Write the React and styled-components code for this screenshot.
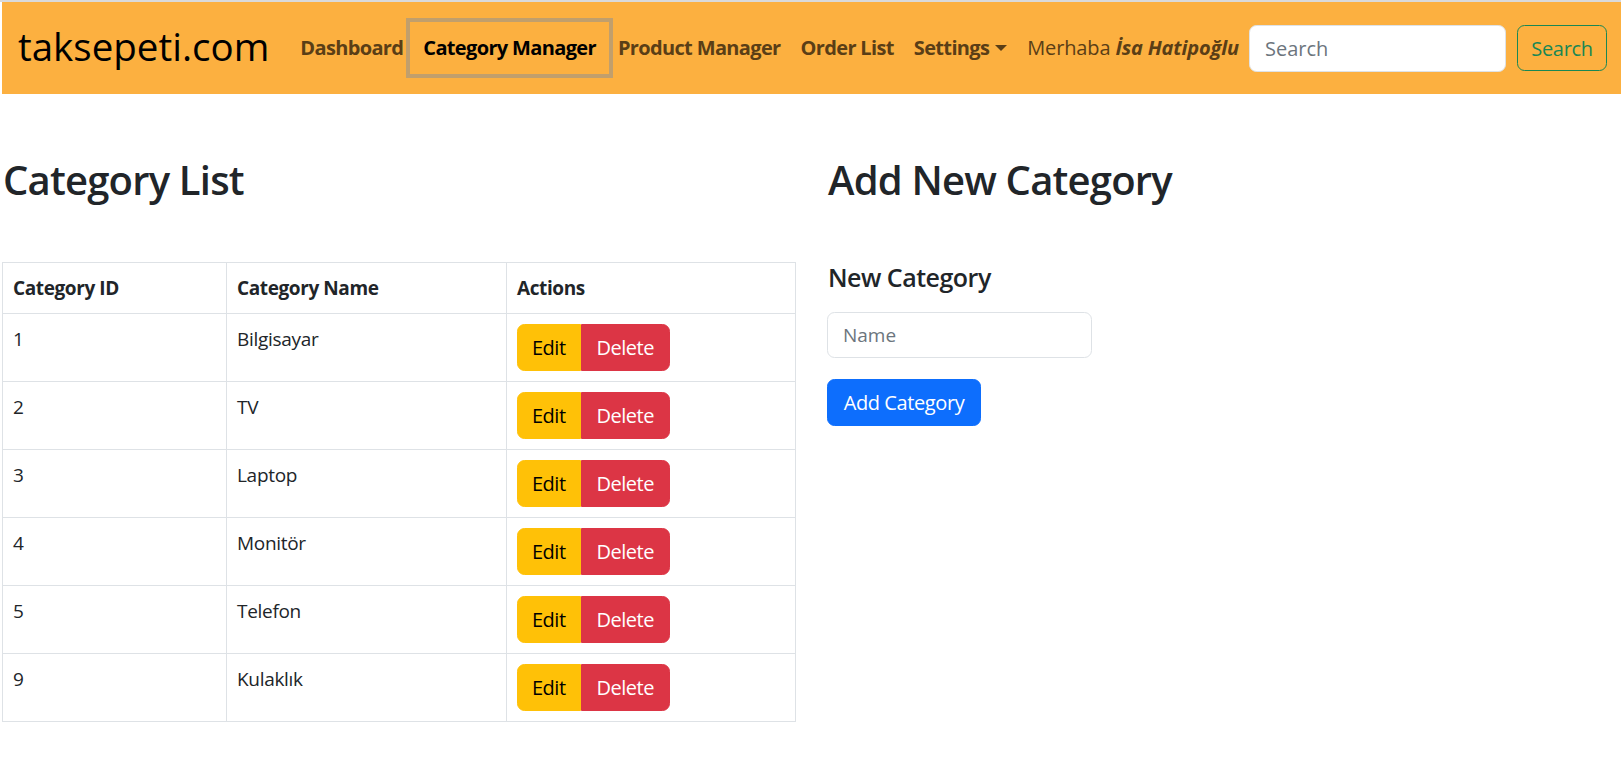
import React from "react";
import styled, { createGlobalStyle } from "styled-components";

const GlobalStyle = createGlobalStyle`
  *, *::before, *::after { box-sizing: border-box; }
  html, body { margin: 0; padding: 0; background: #fff; }
  body {
    font-family: "Open Sans", "Noto Sans", "Liberation Sans", sans-serif;
    font-size: 20px;
    line-height: 1.5;
    color: #212529;
  }
`;

const Page = styled.div`
  border-top: 2px solid #dadada;
  padding-left: 2px;
  min-height: 755px;
`;

const Navbar = styled.nav`
  display: flex;
  align-items: center;
  height: 92px;
  background: #fcb040;
  padding: 0 14px 0 16px;
`;

const Brand = styled.a`
  font-size: 38.5px;
  line-height: 1;
  color: #000;
  text-decoration: none;
  margin-right: 21px;
  padding-bottom: 4px;
`;

const NavList = styled.ul`
  display: flex;
  align-items: center;
  list-style: none;
  margin: 0;
  padding: 0;
`;

const NavLink = styled.li`
  position: relative;
  padding: 0 10px;
  font-weight: 700;
  font-size: 20px;
  letter-spacing: -0.65px;
  line-height: 30px;
  color: ${(p) => (p.$active ? "#000" : "#5a3e16")};
  white-space: nowrap;
  cursor: pointer;
  ${(p) =>
    p.$active &&
    `
    outline: 4px solid #c19f6c;
    outline-offset: 11px;
    margin: 0 10px 0 8px;
    padding: 0 2px;
  `}
`;

const Caret = styled.span`
  display: inline-block;
  margin-left: 6px;
  vertical-align: 4px;
  border-top: 6px solid currentColor;
  border-left: 6px solid transparent;
  border-right: 6px solid transparent;
`;

const Greeting = styled.span`
  margin-left: 10px;
  font-size: 20px;
  letter-spacing: -0.15px;
  color: #5a3e16;
  white-space: nowrap;

  strong {
    font-weight: 700;
    font-style: italic;
  }
`;

const SearchForm = styled.form`
  display: flex;
  align-items: center;
  gap: 11px;
  margin-left: auto;
`;

const SearchInput = styled.input`
  width: 257px;
  height: 47px;
  padding: 7px 15px;
  font-family: inherit;
  font-size: 20px;
  color: #212529;
  background: #fff;
  border: 1px solid #dee2e6;
  border-radius: 7.5px;
  &::placeholder { color: #6c757d; }
  &:focus { outline: none; }
`;

const OutlineButton = styled.button`
  height: 46px;
  width: 90px;
  padding: 0;
  font-family: inherit;
  font-size: 20px;
  letter-spacing: -0.3px;
  color: #198754;
  background: transparent;
  border: 1px solid #198754;
  border-radius: 7.5px;
  cursor: pointer;
`;

const Main = styled.main`
  display: grid;
  grid-template-columns: 794px 1fr;
  column-gap: 31px;
  padding-top: 62px;
`;

const Column = styled.section`
  display: flex;
  flex-direction: column;
  align-items: flex-start;
`;

const Heading = styled.h2`
  margin: 0 0 58px 1px;
  font-size: 40px;
  font-weight: 600;
  line-height: 48px;
  letter-spacing: -0.8px;
  color: #212529;
`;

const Table = styled.table`
  width: 794px;
  border-collapse: collapse;
  font-size: 19px;
  letter-spacing: -0.3px;
  vertical-align: top;

  th, td {
    border: 1px solid #dee2e6;
    padding: 10px 10px;
    text-align: left;
    vertical-align: top;
    line-height: 30px;
  }
  th {
    font-weight: 700;
    font-size: 19px;
    letter-spacing: -0.4px;
  }
`;

const ButtonGroup = styled.div`
  display: inline-flex;
`;

const ActionButton = styled.button`
  height: 47px;
  padding: 0 ${(p) => (p.$variant === "danger" ? "15px" : "14px")};
  font-family: inherit;
  font-size: 20px;
  letter-spacing: -0.5px;
  border: 1px solid ${(p) => (p.$variant === "danger" ? "#dc3545" : "#ffc107")};
  background: ${(p) => (p.$variant === "danger" ? "#dc3545" : "#ffc107")};
  color: ${(p) => (p.$variant === "danger" ? "#fff" : "#000")};
  border-radius: ${(p) => (p.$variant === "danger" ? "0 7.5px 7.5px 0" : "7.5px 0 0 7.5px")};
  cursor: pointer;
`;

const Form = styled.form`
  display: flex;
  flex-direction: column;
  align-items: flex-start;
`;

const Label = styled.label`
  margin: 0 0 20px 1px;
  font-size: 25px;
  font-weight: 600;
  line-height: 30px;
  letter-spacing: -0.5px;
`;

const TextInput = styled.input`
  width: 265px;
  height: 46px;
  padding: 7px 15px;
  font-family: inherit;
  font-size: 19px;
  color: #212529;
  border: 1px solid #dee2e6;
  border-radius: 7.5px;
  &::placeholder { color: #6c757d; }
  &:focus { outline: none; }
`;

const PrimaryButton = styled.button`
  margin-top: 21px;
  height: 47px;
  width: 154px;
  padding: 0;
  font-family: inherit;
  font-size: 20px;
  letter-spacing: -0.4px;
  color: #fff;
  background: #0d6efd;
  border: 1px solid #0d6efd;
  border-radius: 7.5px;
  cursor: pointer;
`;

const categories = [
  { id: 1, name: "Bilgisayar" },
  { id: 2, name: "TV" },
  { id: 3, name: "Laptop" },
  { id: 4, name: "Monitör" },
  { id: 5, name: "Telefon" },
  { id: 9, name: "Kulaklık" },
];

export default function App() {
  return (
    <>
      <GlobalStyle />
      <Page>
        <Navbar>
          <Brand href="#">taksepeti.com</Brand>
          <NavList>
            <NavLink>Dashboard</NavLink>
            <NavLink $active>Category Manager</NavLink>
            <NavLink>Product Manager</NavLink>
            <NavLink>Order List</NavLink>
            <NavLink>
              Settings<Caret />
            </NavLink>
          </NavList>
          <Greeting>
            Merhaba <strong>İsa Hatipoğlu</strong>
          </Greeting>
          <SearchForm onSubmit={(e) => e.preventDefault()}>
            <SearchInput type="search" placeholder="Search" />
            <OutlineButton type="submit">Search</OutlineButton>
          </SearchForm>
        </Navbar>
        <Main>
          <Column>
            <Heading>Category List</Heading>
            <Table>
              <colgroup>
                <col style={{ width: "224px" }} />
                <col style={{ width: "280px" }} />
                <col />
              </colgroup>
              <thead>
                <tr>
                  <th>Category ID</th>
                  <th>Category Name</th>
                  <th>Actions</th>
                </tr>
              </thead>
              <tbody>
                {categories.map((c) => (
                  <tr key={c.id}>
                    <td>{c.id}</td>
                    <td>{c.name}</td>
                    <td>
                      <ButtonGroup>
                        <ActionButton $variant="warning">Edit</ActionButton>
                        <ActionButton $variant="danger">Delete</ActionButton>
                      </ButtonGroup>
                    </td>
                  </tr>
                ))}
              </tbody>
            </Table>
          </Column>
          <Column>
            <Heading>Add New Category</Heading>
            <Form onSubmit={(e) => e.preventDefault()}>
              <Label htmlFor="name">New Category</Label>
              <TextInput id="name" placeholder="Name" />
              <PrimaryButton type="submit">Add Category</PrimaryButton>
            </Form>
          </Column>
        </Main>
      </Page>
    </>
  );
}
